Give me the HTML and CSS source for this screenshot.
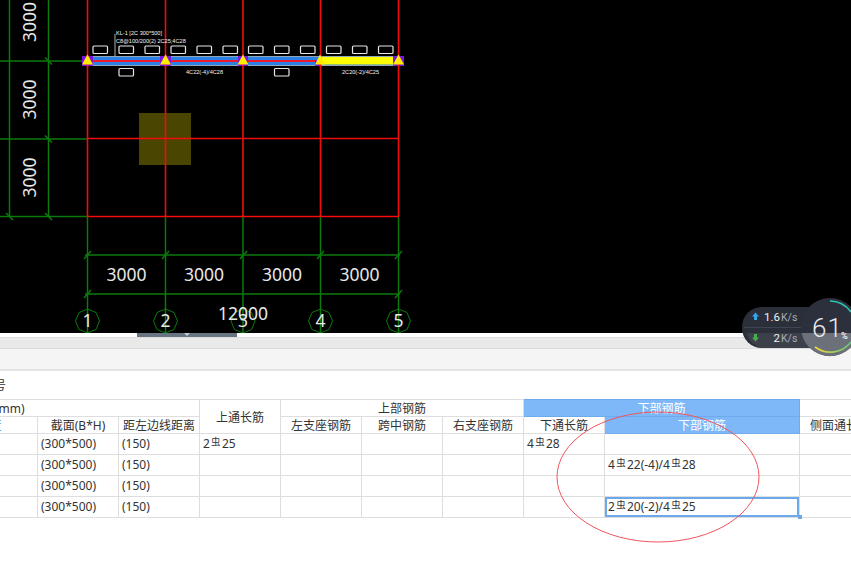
FILE: index.html
```html
<!DOCTYPE html>
<html lang="zh">
<head>
<meta charset="utf-8">
<title>梁平法表格</title>
<link rel="stylesheet" href="styles.css">
</head>
<body>
<main class="page">
  <svg class="cad" width="851" height="333" viewBox="0 0 851 333" xmlns="http://www.w3.org/2000/svg">
    <rect class="col-fill" x="139" y="113" width="52" height="52"/>
    <path class="green" d="M9.500 0V216.500M48.500 0V216.500M0 61H87M0 139H87M0 216.500H87M87.500 216V333M165.500 216V333M243 216V333M320.500 216V333M398.500 216V333M85 255H400M85 294H400"/>
    <path class="green" d="M45 57.500L52 64.500M45 135.500L52 142.500M45 213L52 220M6 213L13 220M84 259L91 251M162 259L169 251M240 259L247 251M317 259L324 251M395 259L402 251M84 298L91 290M395 298L402 290"/>
    <path class="red" d="M87.500 0V216.500M165.500 0V216.500M243 0V216.500M320.500 0V216.500M398.500 0V216.500M87 138.500H399M87 216.500H399"/>
    <g class="octagons">
      <polygon points="87.500,309 96,312.500 99.500,321 96,329.500 87.500,333 79,329.500 75.500,321 79,312.500"/>
      <polygon points="165.500,309 174,312.500 177.500,321 174,329.500 165.500,333 157,329.500 153.500,321 157,312.500"/>
      <polygon points="243,309 251.500,312.500 255,321 251.500,329.500 243,333 234.500,329.500 231,321 234.500,312.500"/>
      <polygon points="320.500,309 329,312.500 332.500,321 329,329.500 320.500,333 312,329.500 308.500,321 312,312.500"/>
      <polygon points="398.500,309 407,312.500 410.500,321 407,329.500 398.500,333 390,329.500 386.500,321 390,312.500"/>
    </g>
    <g class="dim">
      <text transform="translate(36 22) rotate(-90)">3000</text>
      <text transform="translate(36 99.500) rotate(-90)">3000</text>
      <text transform="translate(36 177.500) rotate(-90)">3000</text>
      <text x="126.500" y="281">3000</text>
      <text x="204" y="281">3000</text>
      <text x="282" y="281">3000</text>
      <text x="359.500" y="281">3000</text>
      <text x="87.500" y="327">1</text>
      <text x="165.500" y="327">2</text>
      <text x="243" y="327">3</text>
      <text x="320.500" y="327">4</text>
      <text x="398.500" y="327">5</text>
      <text x="243" y="320">12000</text>
    </g>
    <rect class="beam-edge" x="82" y="56" width="322" height="10"/>
    <rect class="beam-blue" x="87" y="57" width="312" height="8"/>
    <rect class="beam-red" x="87" y="60" width="312" height="2"/>
    <rect class="beam-yellow" x="321" y="57" width="77" height="7.500"/>
    <g class="purple">
      <rect x="82" y="56" width="11" height="10"/>
      <rect x="160" y="56" width="11" height="10"/>
      <rect x="238" y="56" width="10" height="10"/>
      <rect x="315" y="60" width="6" height="6"/>
      <rect x="393" y="56" width="11" height="10"/>
    </g>
    <path class="red" d="M87.500 55V67M165.500 55V67M243 55V67M320.500 55V67M398.500 55V67"/>
    <g class="tri">
      <polygon points="87.500,54.500 93,64.500 82,64.500"/>
      <polygon points="165.500,54.500 171,64.500 160,64.500"/>
      <polygon points="243,54.500 248.500,64.500 237.500,64.500"/>
      <polygon points="320,54.500 325.500,64.500 315,64.500"/>
      <polygon points="398.500,54.500 404,64.500 393,64.500"/>
    </g>
    <g class="slots">
      <rect x="93" y="46" width="14.500" height="7.500" rx="1"/>
      <rect x="119" y="46" width="14.500" height="7.500" rx="1"/>
      <rect x="145" y="46" width="14.500" height="7.500" rx="1"/>
      <rect x="171" y="46" width="14.500" height="7.500" rx="1"/>
      <rect x="197" y="46" width="14.500" height="7.500" rx="1"/>
      <rect x="223" y="46" width="14.500" height="7.500" rx="1"/>
      <rect x="248.500" y="46" width="14.500" height="7.500" rx="1"/>
      <rect x="274.500" y="46" width="14.500" height="7.500" rx="1"/>
      <rect x="300.500" y="46" width="14.500" height="7.500" rx="1"/>
      <rect x="326.500" y="46" width="14.500" height="7.500" rx="1"/>
      <rect x="352.500" y="46" width="14.500" height="7.500" rx="1"/>
      <rect x="378.500" y="46" width="14.500" height="7.500" rx="1"/>
      <rect x="119" y="68.500" width="14.500" height="7.500" rx="1"/>
      <rect x="274.500" y="68.500" width="14.500" height="7.500" rx="1"/>
    </g>
    <path class="leader" d="M115 34V57"/>
    <g class="tiny">
      <text x="116" y="35">KL-1 [2C 300*500]</text>
      <text x="116" y="43">C8@100/200(2) 2C25;4C28</text>
      <text x="186" y="73.500">4C22(-4)/4C28</text>
      <text x="342" y="73.500">2C20(-2)/4C25</text>
    </g>
  </svg>

  <div class="splitter"><div class="handle"><span class="handle-arrow"></span></div></div>
  <div class="toolbar"></div>
  <div class="subbar"></div>

  <section class="panel">
    <div class="panel-title"><span class="clip-title">号</span></div>
    <div class="table-wrap">
      <table class="grid">
        <colgroup>
          <col class="c-first"><col class="c-std"><col class="c-std"><col class="c-std"><col class="c-std"><col class="c-std"><col class="c-std"><col class="c-std"><col class="c-wide"><col class="c-std">
        </colgroup>
        <thead>
          <tr class="head-row">
            <th colspan="3" class="left"><span class="clip-mm">(mm)</span></th>
            <th rowspan="2">上通长筋</th>
            <th colspan="3">上部钢筋</th>
            <th colspan="2" class="active">下部钢筋</th>
            <th></th>
          </tr>
          <tr class="head-row">
            <th class="left"><span class="clip-dot">度</span></th>
            <th>截面(B*H)</th>
            <th>距左边线距离</th>
            <th>左支座钢筋</th>
            <th>跨中钢筋</th>
            <th>右支座钢筋</th>
            <th>下通长筋</th>
            <th class="active">下部钢筋</th>
            <th>侧面通长筋</th>
          </tr>
        </thead>
        <tbody>
          <tr class="row">
            <td></td><td>(300*500)</td><td>(150)</td>
            <td>2<span class="rebar">虫</span>25</td>
            <td></td><td></td><td></td>
            <td>4<span class="rebar">虫</span>28</td>
            <td></td><td></td>
          </tr>
          <tr class="row">
            <td></td><td>(300*500)</td><td>(150)</td>
            <td></td><td></td><td></td><td></td><td></td>
            <td>4<span class="rebar">虫</span>22(-4)/4<span class="rebar">虫</span>28</td>
            <td></td>
          </tr>
          <tr class="row">
            <td></td><td>(300*500)</td><td>(150)</td>
            <td></td><td></td><td></td><td></td><td></td><td></td><td></td>
          </tr>
          <tr class="row">
            <td></td><td>(300*500)</td><td>(150)</td>
            <td></td><td></td><td></td><td></td><td></td>
            <td class="selected">2<span class="rebar">虫</span>20(-2)/4<span class="rebar">虫</span>25</td>
            <td></td>
          </tr>
        </tbody>
      </table>
    </div>
  </section>

  <span class="fill-handle"></span>

  <svg class="ring" width="210" height="136" viewBox="0 0 210 136" xmlns="http://www.w3.org/2000/svg">
    <ellipse cx="105" cy="68" rx="101" ry="65"/>
  </svg>

  <aside class="speed">
    <svg class="speed-svg" width="110" height="62" viewBox="741 297 110 62" xmlns="http://www.w3.org/2000/svg">
      <defs>
        <linearGradient id="arcLow" x1="0" x2="1" y1="0" y2="0">
          <stop offset="0" stop-color="#f2d53c"/>
          <stop offset="1" stop-color="#5fc87a"/>
        </linearGradient>
      </defs>
      <rect class="pill-top" x="742" y="307" width="88" height="41" rx="20"/>
      <path class="pill-low" d="M746.500 333H830V348H762A20 20 0 0 1 746.500 333Z"/>
      <path class="pill-line" d="M744 327.500H801"/>
      <path class="up" d="M755.500 312.500L759 316.500H757V320H754V316.500H752Z"/>
      <path class="down" d="M755.500 341.500L759 337.500H757V334H754V337.500H752Z"/>
      <text class="speed-num" x="780" y="321">1.6</text>
      <text class="speed-unit" x="781" y="321">K/s</text>
      <text class="speed-num" x="780" y="342">2</text>
      <text class="speed-unit" x="781" y="342">K/s</text>
      <circle class="disc-dark" cx="830" cy="327" r="29"/>
      <path class="disc-light" d="M801.600 333A29 29 0 0 0 858.400 333Z"/>
      <path class="arc-teal" d="M830 301A26 26 0 0 1 851 312"/>
      <path class="arc-low" d="M815 347A26 26 0 0 0 851 342"/>
      <text class="pct" x="812" y="337">61</text>
      <text class="pct-sign" x="841" y="339">%</text>
    </svg>
  </aside>
</main>
</body>
</html>
```

FILE: styles.css
```css
* { box-sizing: border-box; }
html, body { margin: 0; padding: 0; background: #fff; }
body { width: 851px; height: 571px; overflow: hidden; font-family: "Noto Sans", "Noto Sans CJK SC", sans-serif; font-size: 12px; color: #333; }
.page { position: relative; width: 851px; height: 571px; overflow: hidden; }

.cad { display: block; background: #000; }
.col-fill { fill: #4a4500; }
.green { stroke: #0b7a0b; stroke-width: 1.500; fill: none; }
.red { stroke: #f40c0c; stroke-width: 1.600; fill: none; }
.octagons polygon { fill: none; stroke: #0b7a0b; stroke-width: 1; }
.dim text { fill: #e8e8e8; font-family: "Noto Sans", sans-serif; font-size: 17.5px; text-anchor: middle; }
.beam-edge { fill: #8fa6b8; }
.beam-blue { fill: #2c82e4; }
.beam-red { fill: #f01a2c; }
.beam-yellow { fill: #ffff00; }
.purple rect { fill: #7a14e0; }
.tri polygon { fill: #ffec00; }
.slots rect { fill: none; stroke: #e6e6e6; stroke-width: 1.200; }
.leader { stroke: #b0b0b0; stroke-width: 1; }
.tiny text { fill: #f4f4f4; font-family: "Liberation Sans", sans-serif; font-size: 5.600px; }

.splitter { height: 4px; background: #fff; }
.handle { width: 100px; height: 4px; margin-left: 137px; background: #677481; display: flex; justify-content: center; }
.handle-arrow { width: 0; height: 0; border-left: 3px solid transparent; border-right: 3px solid transparent; border-top: 3px solid #c8ccd0; }
.toolbar { height: 12px; background: #e9e9e9; border-top: 1px solid #dcdcdc; border-bottom: 1px solid #dcdcdc; }
.subbar { height: 22px; background: #f5f5f5; border-bottom: 2px solid #e4e4e4; }

.panel { background: #fff; }
.panel-title { height: 28px; padding-top: 6px; line-height: 18px; font-size: 12px; white-space: nowrap; overflow: hidden; }
.clip-title { display: inline-block; margin-left: -6px; }
.table-wrap { overflow: hidden; width: 851px; }
.grid { table-layout: fixed; border-collapse: collapse; width: 881px; margin-left: -1px; }
.c-first { width: 38px; }
.c-std { width: 81px; }
.c-wide { width: 195px; }
.grid th, .grid td { border: 1px solid #dedede; padding: 0; white-space: nowrap; overflow: hidden; font-weight: 400; font-size: 12px; }
.grid th { text-align: center; line-height: 15px; height: 17px; padding-top: 1px; }
.grid th.left { text-align: left; }
.clip-mm { display: inline-block; margin-left: -5px; }
.clip-dot { display: inline-block; margin-left: -10.500px; color: #3b9ae1; }
.grid th.active { background: #7eb8f8; color: #fff; border-color: #6eaaec; }
.grid td { height: 21px; line-height: 18px; padding-left: 3px; }
.rebar { display: inline-block; width: 11px; font-size: 9.500px; line-height: 9px; text-align: center; vertical-align: 3px; margin: 0 0.500px; }
.grid td.selected { box-shadow: inset 0 0 0 2px #6ba9ea; }

.fill-handle { position: absolute; left: 798px; top: 515px; width: 4px; height: 4px; background: #6ba9ea; }

.ring { position: absolute; left: 553px; top: 409px; }
.ring ellipse { fill: none; stroke: #f0565e; stroke-width: 1; }

.speed { position: absolute; left: 741px; top: 297px; width: 110px; height: 62px; }
.speed-svg { display: block; overflow: hidden; }
.pill-top { fill: #2a2f3a; }
.pill-low { fill: #3c404b; }
.pill-line { stroke: #3f4552; stroke-width: 1; }
.up { fill: #35a4e6; }
.down { fill: #46ad4a; }
.speed-num { fill: #f0f0f0; font-family: "Roboto", sans-serif; font-size: 11.500px; text-anchor: end; }
.speed-unit { fill: #a6abb4; font-family: "Roboto", sans-serif; font-size: 10.500px; }
.disc-dark { fill: #2b303c; }
.disc-light { fill: #6c7079; }
.arc-teal { fill: none; stroke: #2dc6ae; stroke-width: 1.600; }
.arc-low { fill: none; stroke: url(#arcLow); stroke-width: 1.600; }
.pct { fill: #e9ebee; font-family: "Roboto", sans-serif; font-weight: 300; font-size: 26px; letter-spacing: 1px; }
.pct-sign { fill: #f2f2f2; font-family: "Roboto", sans-serif; font-weight: 700; font-size: 9px; }
```
